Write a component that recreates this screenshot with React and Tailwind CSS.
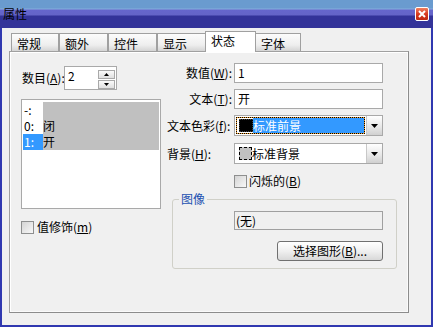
const Tab = ({ label, active }) =>
  active ? (
    <div className="relative z-10 -mb-[1px] h-[21px] w-[51px] border border-b-0 border-[#a0a0a0] bg-white pl-[5px] pt-[2px] leading-[14px]">
      {label}
    </div>
  ) : (
    <div className="h-[18px] border border-b-0 border-[#a0a0a0] bg-[linear-gradient(to_bottom,#fcfcfc,#eeeeee_65%,#d4d4d4)] pl-[5px] pt-[3px] leading-[14px] -ml-[1px] first:ml-0">
      {label}
    </div>
  );

const Checkbox = () => (
  <span className="block h-[13px] w-[13px] shrink-0 border border-[#8e8f8f] bg-[linear-gradient(135deg,#d4d4d4,#f8f8f8)]" />
);

const Arrow = () => (
  <svg width="7" height="4" viewBox="0 0 7 4">
    <path d="M0 0h7L3.5 4z" fill="#000" />
  </svg>
);

const DropButton = () => (
  <div className="flex w-[16px] items-center justify-center border-l border-[#c8c8c8] bg-[linear-gradient(to_bottom,#ffffff,#e6e6e6_60%,#d0d0d0)]">
    <Arrow />
  </div>
);

const U = ({ children }) => <span className="underline underline-offset-1">{children}</span>;

const App = () => {
  const rows = [
    { idx: '-:', val: '' },
    { idx: '0:', val: '闭' },
    { idx: '1:', val: '开', selected: true },
  ];

  return (
    <div className="flex h-[327px] w-[433px] flex-col bg-[#3038b0] text-[12px] text-black font-['Noto_Sans_CJK_SC','Noto_Sans',sans-serif]">
      {/* title bar */}
      <div className="flex h-[28px] items-start justify-between bg-[linear-gradient(to_bottom,#6a9bcf_0px,#6a9bcf_8px,#86aede_9px,#6666cc_10px,#6464c8_15px,#333399_16px,#333399_28px)] pl-[3px] pr-[4px]">
        <span className="mt-[7px] leading-[13px]">属性</span>
        <div className="mt-[7px] flex h-[14px] w-[14px] items-center justify-center rounded-[2px] border border-white bg-[linear-gradient(to_bottom,#f08060,#d83a20_50%,#c02810)]">
          <svg width="8" height="8" viewBox="0 0 8 8">
            <path d="M1 1l6 6M7 1L1 7" stroke="#fff" strokeWidth="2" />
          </svg>
        </div>
      </div>

      {/* client */}
      <div className="ml-[2px] mr-[2px] mb-[2px] flex-1 bg-[#f0f0f0] pl-[7px] pt-[3px]">
        <div className="flex items-end pl-[2px]">
          <div className="w-[48px]"><Tab label="常规" /></div>
          <div className="w-[49px]"><Tab label="额外" /></div>
          <div className="w-[49px]"><Tab label="控件" /></div>
          <div className="w-[49px]"><Tab label="显示" /></div>
          <div className="-ml-[1px]"><Tab label="状态" active /></div>
          <div className="w-[46px] -ml-[1px]"><Tab label="字体" /></div>
        </div>

        <div className="flex h-[262px] w-[400px] border border-[#a0a0a0] border-r-[#8c8c8c] border-b-[#8c8c8c] pl-[11px] pt-[11px] shadow-[inset_1px_1px_0_#fff,inset_-1px_-1px_0_#fafafa]">
          {/* left column */}
          <div className="mt-[3px] flex w-[140px] flex-col">
            <div className="flex items-center">
              <span className="ml-[1px] w-[42px] shrink-0 whitespace-nowrap leading-[14px]">数目(<U>A</U>):</span>
              <div className="flex h-[24px] w-[53px] justify-between border border-[#a9a9a9] bg-white pl-[3px] pr-[1px] pt-[2px]">
                <span className="leading-[14px]">2</span>
                <div className="flex flex-col gap-[1px] pt-[1px]">
                  <div className="flex h-[9px] w-[17px] items-center justify-center border border-[#a9a9a9] bg-[linear-gradient(to_bottom,#fafafa,#e0e0e0)]">
                    <svg width="5" height="3" viewBox="0 0 5 3"><path d="M2.5 0L5 3H0z" /></svg>
                  </div>
                  <div className="flex h-[9px] w-[17px] items-center justify-center border border-[#a9a9a9] bg-[linear-gradient(to_bottom,#fafafa,#e0e0e0)]">
                    <svg width="5" height="3" viewBox="0 0 5 3"><path d="M0 0h5L2.5 3z" /></svg>
                  </div>
                </div>
              </div>
            </div>

            <div className="mt-[9px] h-[110px] w-[140px] border border-[#a9a9a9] bg-white pl-[1px] pr-[1px] pt-[2px]">
              {rows.map((r) => (
                <div key={r.idx} className="flex h-[16px] leading-[16px]">
                  <span className={`w-[20px] pl-[1px] ${r.selected ? 'bg-[#3399ff] text-white' : ''}`}>{r.idx}</span>
                  <span className="flex-1 bg-[#c0c0c0]">{r.val}</span>
                </div>
              ))}
            </div>

            <div className="mt-[11px] flex items-center gap-[3px]">
              <Checkbox />
              <span className="leading-[14px]">值修饰(<U>m</U>)</span>
            </div>
          </div>

          {/* right column */}
          <div className="ml-[6px] flex w-[230px] flex-col">
            <div className="grid grid-cols-[65px_149px] gap-x-[2px]">
              <span className="self-center text-right leading-[14px]">数值(<U>W</U>):</span>
              <div className="h-[20px] border border-[#a9a9a9] bg-white pl-[3px] leading-[18px]">1</div>

              <span className="mt-[6px] self-center text-right leading-[14px]">文本(<U>T</U>):</span>
              <div className="mt-[6px] h-[20px] border border-[#a9a9a9] bg-white pl-[3px] leading-[18px]">开</div>

              <span className="mt-[6px] self-center whitespace-nowrap leading-[14px]">文本色彩(<U>f</U>):</span>
              <div className="mt-[6px] flex h-[21px] border border-[#a9a9a9] bg-white">
                <div className="m-[1px] flex flex-1 items-center border border-dotted border-black bg-[#f0a030]">
                  <div className="flex h-full flex-1 items-center bg-white">
                    <span className="ml-[2px] h-[13px] w-[14px] border border-dotted border-[#444] bg-black" />
                    <span className="flex h-full flex-1 items-center bg-[#3399ff] text-white leading-[14px]">标准前景</span>
                  </div>
                </div>
                <DropButton />
              </div>

              <span className="mt-[7px] self-center leading-[14px]">背景(<U>H</U>):</span>
              <div className="mt-[7px] flex h-[21px] border border-[#a9a9a9] bg-white">
                <div className="flex flex-1 items-center">
                  <span className="ml-[4px] h-[13px] w-[13px] border border-dashed border-black bg-[#c0c0c0]" />
                  <span className="leading-[14px]">标准背景</span>
                </div>
                <DropButton />
              </div>
            </div>

            <div className="ml-[67px] mt-[10px] flex items-center gap-[2px]">
              <Checkbox />
              <span className="leading-[14px]">闪烁的(<U>B</U>)</span>
            </div>

            <fieldset className="ml-[5px] mt-[5px] h-[76px] w-[225px] rounded-[3px] border border-[#d0d0c8]">
              <legend className="ml-[6px] px-[2px] leading-[12px] text-[#1c50b0]">图像</legend>
              <div className="ml-[61px] mt-[6px] h-[19px] w-[149px] border border-[#a0a0a0] pl-[1px] leading-[17px]">(无)</div>
              <div className="ml-[104px] mt-[11px] flex h-[20px] w-[106px] items-center justify-center rounded-[3px] border border-[#707070] bg-[linear-gradient(to_bottom,#ffffff,#f0f0f0_50%,#d8d8d8)] leading-[14px]">
                选择图形(<U>B</U>)...
              </div>
            </fieldset>
          </div>
        </div>
      </div>
    </div>
  );
};

export default App;
